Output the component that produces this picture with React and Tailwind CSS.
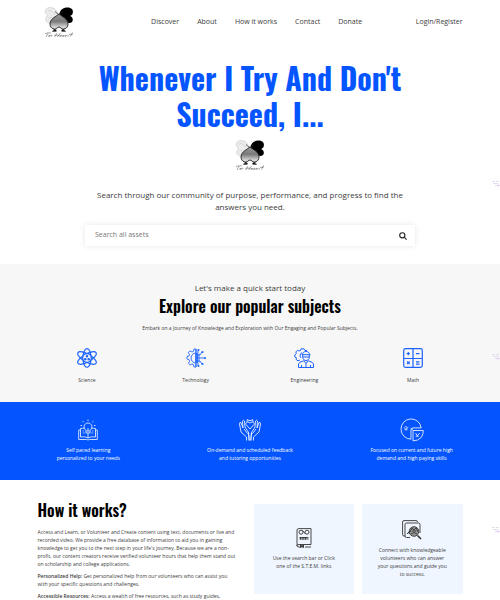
import React from "react";

const heading = "font-['Oswald','Roboto_Condensed','Open_Sans',sans-serif]";

function Logo({ className }) {
  return (
    <svg viewBox="0 0 30 31" className={className} role="img" aria-label="Tri Hundred">
      <defs>
        <linearGradient id="spade" x1="0" y1="0" x2="0" y2="1">
          <stop offset="0" stopColor="#999" />
          <stop offset=".5" stopColor="#7a7a7a" />
          <stop offset="1" stopColor="#f2f2f2" />
        </linearGradient>
      </defs>
      <path d="M14 8C13 3 10 .6 6 .6C2.500 .6 .8 3 1.400 5.500C1.800 7.500 3 8 3.800 8.600C1.600 10 1 13 2.800 15C5 17 8 16 9.500 13Z" fill="#ececec" stroke="#cfcfcf" strokeWidth=".8" />
      <path d="M3.500 4.500C6 2.500 9 4 11 8M4 12.500C5.500 10 8 10 10 11.500" fill="none" stroke="#cdcdcd" strokeWidth=".8" />
      <path d="M15 8C16 3 19 .6 23.500 .6C27.500 .6 29.500 3 28.800 6C28.500 8 27 8.500 26.200 9C28.800 10 29.600 13 28 15C26 17 22.500 16 20.500 13Z" fill="#000" />
      <path d="M11 4.500L15 8L18.500 4.500" fill="none" stroke="#222" strokeWidth=".7" />
      <path d="M15 6.800C17.500 9.500 24 11.500 24 17C24 22 18.500 23.500 16 20.200H14C11.500 23.500 6 22 6 17C6 11.500 12.500 9.500 15 6.800Z" fill="url(#spade)" stroke="#222" strokeWidth=".9" />
      <path d="M9.500 22L10.800 23.200L8.500 24.200H12.300L11.800 22.500M20.500 22L19.200 23.200L21.500 24.200H17.700L18.200 22.500" fill="#111" stroke="#111" strokeWidth=".7" />
      <path d="M1 26.500Q4 25.500 7 26M4 26.200L2 30M4.500 29.500L5.500 28L5.300 29.500L7.500 28M8 28L7.500 29.500M13 26L10.500 30M10.500 28.200H15.500M16.500 26L13.500 30M15.500 29.500L16.500 28.300V29.500L18 28.300V29.500L19.500 28.300V29.500L21.500 28.300V29.500L23 28.300Q23.500 30 25 28.500M28.500 25.500L26.500 29.500M25 27.500L29 27" fill="none" stroke="#4a4a4a" strokeWidth=".5" />
    </svg>
  );
}

function Science() {
  return (
    <svg viewBox="0 0 20 20" className="size-5" fill="none" stroke="#1b62ff" strokeWidth="1.2">
      <ellipse cx="10" cy="10" rx="4" ry="9.400" />
      <ellipse cx="10" cy="10" rx="4" ry="10.500" transform="rotate(60 10 10)" />
      <ellipse cx="10" cy="10" rx="4" ry="10.500" transform="rotate(120 10 10)" />
      <circle cx="10" cy="10" r="4.300" fill="#f7f7f7" />
      <circle cx="10" cy="8.200" r=".7" />
      <circle cx="8.300" cy="11.200" r=".7" />
      <circle cx="11.700" cy="11.200" r=".7" />
    </svg>
  );
}

function Technology() {
  return (
    <svg viewBox="0 0 20 20" className="size-5" fill="none" stroke="#1b62ff" strokeWidth=".9">
      <path d="M10 1H8L7.500 3.300L6 4L4 2.800L2.300 4.700L3.500 6.500L3 8L1 8.500V11L3 11.600L3.600 13.300L2.400 15.200L4.200 17L6 15.900L7.500 16.600L8 19H10Z" />
      <path d="M10 5A5 5 0 0 0 10 15Z" />
      <path d="M11.500 5V15M13 5.500V14.500M10 1V19M10 7H14L16 4M10 10H19M10 13H14L16 16M12 5V2M12 15V18" />
      <g fill="#1b62ff" stroke="none">
        <circle cx="12.500" cy="2" r="1" />
        <circle cx="16.500" cy="4" r="1.100" />
        <circle cx="19" cy="10" r="1" />
        <circle cx="16.500" cy="16" r="1.100" />
        <circle cx="12.500" cy="18" r="1" />
      </g>
    </svg>
  );
}

function Engineering() {
  return (
    <svg viewBox="0 0 20 20" className="size-5" fill="none" stroke="#1b62ff" strokeWidth="1">
      <path d="M13 2.500L11 2.500L10 .8H7L6.500 2.500L5 3L3.500 2.300L1.800 4L2.300 5.500L.8 7V9L2.300 9.600L2.200 11.500L4 12.800L6 12" />
      <path d="M8 4.500A3.500 3.500 0 0 0 7 10" />
      <path d="M8.500 6.500C8.500 2.500 15.500 2.500 15.500 6.500M7.500 6.700H16.500M8.700 7V9.500C9.200 13.500 14.800 13.500 15.300 9.500V7M8.700 9H15.300" />
      <path d="M4.500 19.500V16Q5 14 9.800 12.800L12 15.500L14.200 12.800Q19 14 19.500 16V19.500ZM12 15.500V19.500M7.500 17V19.500M16.500 17V19.500" />
    </svg>
  );
}

function MathIcon() {
  return (
    <svg viewBox="0 0 20 20" className="size-5" fill="none" stroke="#1b62ff" strokeWidth="1.200">
      <rect x=".7" y=".7" width="18.600" height="18.600" rx="1.800" />
      <path d="M10 1V19M1 10.500H19" />
      <path d="M5.300 4V7.200M3.700 5.600H6.900M13 5.600H16.500M4 13.500L6.700 16.200M6.700 13.500L4 16.200M13 13.800H16.500M13 16.200H16.500" />
    </svg>
  );
}

function Learning() {
  return (
    <svg viewBox="0 0 20 22" className="h-6 w-5" fill="none" stroke="#dfe9ff" strokeWidth=".9">
      <path d="M8 14V11.500C4.500 9 6 4 10 4S15.500 9 12 11.500V14ZM8.200 12H11.800M10 9V12" />
      <path d="M10 .5V2M4.500 2L5.700 3.200M15.500 2L14.300 3.200M2.500 6.500H4M16 6.500H17.500" />
      <path d="M6.500 9.500Q4.500 9 2.500 9.500V18Q7 17 10 19Q13 17 17.500 18V9.500Q15.500 9 13.500 9.500M10 14V19M2.500 11H.7V20.500H8.500L10 21L11.500 20.500H19.300V11H17.500" />
      <path d="M4.500 12H6M4.500 14H7M14 12H15.500M13 14H15.500" strokeWidth=".6" />
    </svg>
  );
}

function Hands() {
  return (
    <svg viewBox="0 0 24 24" className="size-6" fill="none" stroke="#e6eeff" strokeWidth=".9">
      <path d="M12 11L8 6.500C7 4.500 10 3 12 5C14 3 17 4.500 16 6.500ZM9 4L9.300 1.500L11 2.500H13L14.700 1.500L15 4" />
      <path d="M8.500 22.500V19L3 14L1.500 6Q1.500 4 3 4.500L5 10L4.500 3Q5.500 1.500 6.500 3L7 9L10.500 14.500Q11 16.500 9.500 15.500L6 11M10.500 14.500L11.200 22.500Z" />
      <path d="M15.500 22.500V19L21 14L22.500 6Q22.500 4 21 4.500L19 10L19.500 3Q18.500 1.500 17.500 3L17 9L13.500 14.500Q13 16.500 14.500 15.500L18 11M13.500 14.500L12.800 22.500Z" />
    </svg>
  );
}

function Skills() {
  return (
    <svg viewBox="0 0 23 23" className="size-6" fill="none" stroke="#dfe9ff" strokeWidth=".9">
      <path d="M10.500 20.300A9.700 9.700 0 1 1 20.300 9.500M10.500 20.300V11.500Q10.500 9.500 12.500 9.500H20.300" />
      <path d="M12.500 22V12H22.300Q22.500 15 20.500 18.500Q17 22 12.500 22Z" />
      <path d="M4 9L5.500 11L8 9M5 8L7 9M4.500 11.300H7M15 14.500L16.500 17L19 14.500M15 17.500H18M12.500 12L10.500 9.500" />
    </svg>
  );
}

function Guide() {
  return (
    <svg viewBox="0 0 16 20" className="h-5 w-4" fill="none" stroke="#333" strokeWidth=".9">
      <path d="M15 16.500H3Q1 16.500 1 17.800T3 19H4M9 19H15M1 18V2Q1 .6 3 .6H15V16.500" />
      <circle cx="5" cy="4.200" r="2" />
      <circle cx="11" cy="4.200" r="2" />
      <path d="M6.500 2.500L9.500 6M3.500 9.500H12.500M3.500 11H12.500M4.500 9V11.500M7 9V11.500M9.500 9V11.500" />
      <path d="M4.500 16.500V19.700L6 18.500L7.500 19.700V16.500" fill="#555" />
    </svg>
  );
}

function Connect() {
  return (
    <svg viewBox="0 0 20 20" className="size-5" fill="none" stroke="#333" strokeWidth=".9">
      <path d="M3 16H2Q.6 16 .6 14.500V2Q.6 .6 2 .6H14Q15.500 .6 15.500 2M8 17.500H4.500Q3 17.500 3 16V4.500Q3 3 4.500 3H16.500Q18 3 18 4.500V13" />
      <circle cx="12" cy="11.500" r="4.800" fill="#999" />
      <path d="M8 12L10 8L12 10L14 8L16 12M9 14Q12 11 15 14M10 11H14M5 14L8 11M6 12L7.500 14" />
      <path d="M15.500 15.500L19 19" strokeWidth="1.600" />
    </svg>
  );
}

function SearchIcon() {
  return (
    <svg viewBox="0 0 8 8" className="size-2" fill="none" stroke="#222" strokeWidth="1.100">
      <circle cx="3.300" cy="3.300" r="2.600" />
      <path d="M5.200 5.200L7.600 7.600" />
    </svg>
  );
}

function SideMark({ className }) {
  return (
    <svg viewBox="0 0 8 8" className={"absolute right-0 size-2 " + className} fill="none" aria-hidden="true">
      <path d="M0 1.500H3M4 1.500H7M1 3.500H6" stroke="#e2dfee" />
      <path d="M3 5.500H8M6 4V7" stroke="#ead3f6" />
    </svg>
  );
}

const nav = ["Discover", "About", "How it works", "Contact", "Donate"];
const subjects = [
  ["Science", Science],
  ["Technology", Technology],
  ["Engineering", Engineering],
  ["Math", MathIcon],
];
const features = [
  ["Self paced learning", "personalized to your needs", Learning],
  ["On-demand and scheduled feedback", "and tutoring opportunities", Hands],
  ["Focused on current and future high", "demand and high paying skills", Skills],
];

export default function App() {
  return (
    <div className="relative min-h-screen overflow-hidden bg-white font-['Open_Sans',sans-serif] text-[#3c3c3c]">
      <header className="mx-auto flex h-11 w-[85%] items-center justify-between">
        <a href="#home"><Logo className="ml-1.5 h-[31px] w-[30px]" /></a>
        <nav className="flex gap-4.5 pl-6 text-[7px] leading-3">
          {nav.map((n) => <a key={n} href="#nav">{n}</a>)}
        </nav>
        <a href="#login" className="text-[7px] leading-3">Login/Register</a>
      </header>

      <section className="flex flex-col items-center pt-4 text-center">
        <h1 className={heading + " text-[30px] leading-9 font-bold text-[#0455ff]"}>
          Whenever I Try And Don't<br />Succeed, I...
        </h1>
        <Logo className="mt-2 h-[31px] w-[30px]" />
        <p className="mt-4.5 text-[8px] leading-3">
          Search through our community of purpose, performance, and progress to find the<br />answers you need.
        </p>
        <form className="mt-3 flex h-[21px] w-[66%] items-center bg-white px-2 shadow-[0_0_6px_rgba(0,0,0,0.10)]" onSubmit={(e) => e.preventDefault()}>
          <input aria-label="Search all assets" placeholder="Search all assets" className="min-w-0 flex-1 pl-0.5 text-[7px] outline-none placeholder:text-[#777]" />
          <button aria-label="Search"><SearchIcon /></button>
        </form>
      </section>

      <section className="mt-4.5 bg-[#f7f7f7] py-4.5 text-center">
        <p className="text-[8px] leading-3">Let's make a quick start today</p>
        <h2 className={heading + " text-[16px] leading-6 font-semibold text-black"}>Explore our popular subjects</h2>
        <p className="mt-1.5 text-[5px] leading-2">Embark on a Journey of Knowledge and Exploration with Our Engaging and Popular Subjects.</p>
        <div className="mx-auto mt-4 grid w-[87%] grid-cols-4">
          {subjects.map(([name, Icon]) => (
            <a key={name} href="#subject" className="flex flex-col items-center gap-2 text-[5px] leading-2"><Icon />{name}</a>
          ))}
        </div>
      </section>

      <section className="bg-[#0455ff] pt-4 pb-4.5 text-white">
        <div className="mx-auto grid w-[97%] grid-cols-3 text-center text-[5px] leading-2">
          {features.map(([a, b, Icon]) => (
            <div key={a} className="flex flex-col items-center gap-1"><Icon /><p>{a}<br />{b}</p></div>
          ))}
        </div>
      </section>

      <section className="mx-auto flex w-[85%] gap-2 pt-4.5">
        <div className="w-[208px] shrink-0 text-[5px] leading-2 whitespace-nowrap">
          <h2 className={heading + " mb-1.5 text-[16px] leading-6 font-semibold text-black"}>How it works?</h2>
          <p>
            Access and Learn, or Volunteer and Create content using text, documents or live and<br />
            recorded video. We provide a free database of information to aid you in gaining<br />
            knowledge to get you to the next step in your life's journey. Because we are a non-<br />
            profit, our content creators receive verified volunteer hours that help them stand out<br />
            on scholarship and college applications.
          </p>
          <p className="mt-1"><b className="font-semibold">Personalized Help:</b> Get personalized help from our volunteers who can assist you<br />with your specific questions and challenges.</p>
          <p className="mt-1"><b className="font-semibold">Accessible Resources:</b> Access a wealth of free resources, such as study guides,</p>
        </div>
        <div className="grid h-24 flex-1 grid-cols-2 gap-2 pt-1.5 text-center text-[5px] leading-2">
          <article className="flex flex-col items-center justify-center gap-1.5 bg-[#f0f6ff]">
            <Guide /><p>Use the search bar or Click<br />one of the S.T.E.M. links</p>
          </article>
          <article className="flex flex-col items-center justify-center gap-1.5 bg-[#f0f6ff]">
            <Connect /><p>Connect with knowledgeable<br />volunteers who can answer<br />your questions and guide you<br />to success.</p>
          </article>
        </div>
      </section>

      <SideMark className="top-[180px]" />
      <SideMark className="top-[353px]" />
      <SideMark className="top-[526px]" />
    </div>
  );
}
